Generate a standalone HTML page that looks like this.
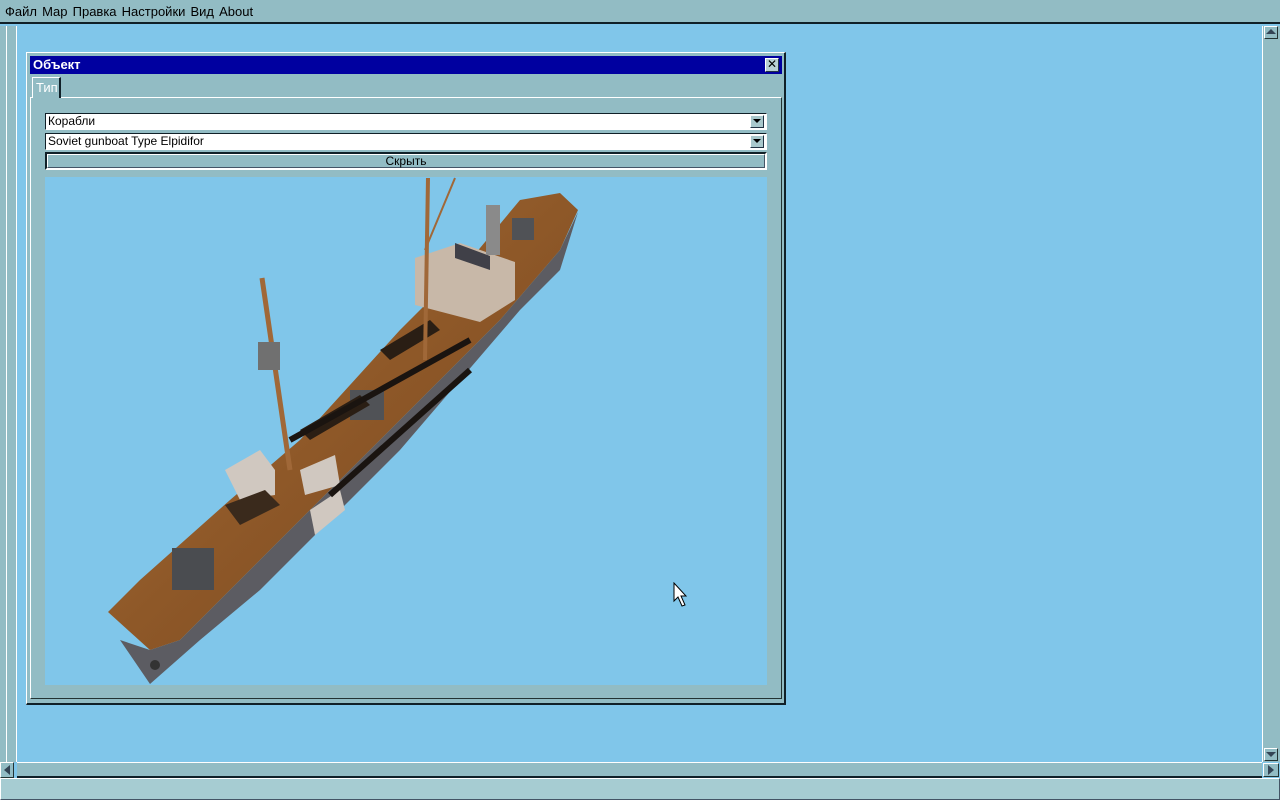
<!DOCTYPE html>
<html><head><meta charset="utf-8"><style>
*{margin:0;padding:0;box-sizing:border-box}
body{width:1280px;height:800px;background:#80c6ea;position:relative;overflow:hidden;font-family:"Liberation Sans","DejaVu Sans",sans-serif;font-size:12px}
.a{position:absolute}
.g{background:#92bcc4}
</style></head><body>
<div class="a g" style="left:0;top:0;width:1280px;height:24px;border-bottom:2px solid #102028"></div>
<div class="a" style="left:5px;top:4px;font-size:13px;color:#000;word-spacing:1.5px">Файл Мар Правка Настройки Вид About</div>
<div class="a g" style="left:0;top:26px;width:17px;height:736px;border-right:1px solid #fff"></div>
<div class="a" style="left:6px;top:26px;width:1px;height:736px;background:#fff"></div>
<div class="a g" style="left:0;top:762px;width:14px;height:16px;border:1px solid #fff;border-right-color:#233;border-bottom-color:#233"></div>
<div class="a" style="left:4px;top:765px;width:0;height:0;border-top:5px solid transparent;border-bottom:5px solid transparent;border-right:6px solid #345"></div>
<div class="a g" style="left:1262px;top:26px;width:18px;height:736px;border-left:1px solid #fff"></div>
<div class="a g" style="left:1264px;top:26px;width:14px;height:13px;border:1px solid #fff;border-right-color:#233;border-bottom-color:#233"></div>
<div class="a" style="left:1266px;top:29px;width:0;height:0;border-left:5px solid transparent;border-right:5px solid transparent;border-bottom:5px solid #345"></div>
<div class="a g" style="left:1264px;top:748px;width:14px;height:13px;border:1px solid #fff;border-right-color:#233;border-bottom-color:#233"></div>
<div class="a" style="left:1266px;top:752px;width:0;height:0;border-left:5px solid transparent;border-right:5px solid transparent;border-top:5px solid #345"></div>
<div class="a g" style="left:17px;top:762px;width:1245px;height:16px;border-top:1px solid #fff;border-bottom:2px solid #102028"></div>
<div class="a g" style="left:1263px;top:763px;width:16px;height:14px;border:1px solid #fff;border-right-color:#233;border-bottom-color:#233"></div>
<div class="a" style="left:1268px;top:765px;width:0;height:0;border-top:5px solid transparent;border-bottom:5px solid transparent;border-left:6px solid #345"></div>
<div class="a" style="left:0;top:778px;width:1280px;height:22px;background:#a6ccd2;border:1px solid #fff;border-right-color:#456;border-bottom-color:#456"></div>
<div class="a g" style="left:26px;top:52px;width:760px;height:653px;border:1px solid #fff;border-right:2px solid #102028;border-bottom:2px solid #102028"></div>
<div class="a" style="left:30px;top:56px;width:752px;height:18px;background:#0000a0;color:#fff;font-weight:bold;font-size:13px;padding:1px 3px">Объект</div>
<div class="a" style="left:765px;top:58px;width:14px;height:14px;background:#b8d0d4;border:1px solid #fff;border-right-color:#234;border-bottom-color:#234;font-size:12px;line-height:11px;text-align:center;font-weight:bold;color:#000">✕</div>
<div class="a" style="left:30px;top:97px;width:752px;height:602px;border-top:1px solid #fff;border-left:1px solid #fff;border-right:1px solid #233;border-bottom:1px solid #233"></div>
<div class="a g" style="left:32px;top:77px;width:29px;height:21px;border:1px solid #fff;border-right:2px solid #102028;border-bottom:none;color:#fff;font-size:13px;padding:2px 3px">Тип</div>
<div class="a" style="left:45px;top:113px;width:722px;height:17px;background:#fff;border:1px solid #102028;border-right-color:#fff;border-bottom-color:#fff;padding:0 2px;line-height:14px">Корабли</div>
<div class="a" style="left:750px;top:115px;width:14px;height:13px;background:#a8c8cc;border:1px solid #fff;border-right-color:#234;border-bottom-color:#234"></div>
<div class="a" style="left:753px;top:119px;border-left:4px solid transparent;border-right:4px solid transparent;border-top:4px solid #000"></div>
<div class="a" style="left:45px;top:133px;width:722px;height:17px;background:#fff;border:1px solid #102028;border-right-color:#fff;border-bottom-color:#fff;padding:0 2px;line-height:14px">Soviet gunboat Type Elpidifor</div>
<div class="a" style="left:750px;top:135px;width:14px;height:13px;background:#a8c8cc;border:1px solid #fff;border-right-color:#234;border-bottom-color:#234"></div>
<div class="a" style="left:753px;top:139px;border-left:4px solid transparent;border-right:4px solid transparent;border-top:4px solid #000"></div>
<div class="a g" style="left:45px;top:152px;width:722px;height:18px;border:2px solid #102028;border-right-color:#fff;border-bottom-color:#fff;text-align:center;line-height:13px">
<div style="border:1px solid #fff;border-right-color:#456;border-bottom-color:#456;height:14px;line-height:12px">Скрыть</div></div>
<div class="a" style="left:45px;top:177px;width:722px;height:508px;background:#80c6ea;overflow:hidden">
<svg width="722" height="508" viewBox="45 177 722 508">
<defs><linearGradient id="w" x1="0" y1="0" x2="1" y2="1"><stop offset="0" stop-color="#a86e3c"/><stop offset="0.5" stop-color="#8e5828"/><stop offset="1" stop-color="#74441e"/></linearGradient></defs>
<polygon points="150,650 180,640 250,570 330,490 420,400 500,320 560,250 578,212 560,270 520,310 460,380 400,450 330,520 260,590 200,640 150,684 120,640" fill="#5c5c62"/>
<polygon points="108,612 140,580 230,500 300,440 400,330 470,260 520,200 560,193 578,210 560,250 500,320 420,400 330,490 250,570 180,640 150,650" fill="url(#w)"/>
<polygon points="415,258 460,243 515,262 515,300 480,322 415,305" fill="#c8b8a8"/>
<polygon points="455,243 490,256 490,270 455,258" fill="#404048"/>
<rect x="486" y="205" width="14" height="50" fill="#8a8a8a"/>
<rect x="172" y="548" width="42" height="42" fill="#4a4c50"/>
<rect x="350" y="390" width="34" height="30" fill="#505256"/>
<rect x="512" y="218" width="22" height="22" fill="#505256"/>
<polygon points="225,470 260,450 275,470 275,495 240,500" fill="#d0c8c0"/>
<polygon points="300,470 335,455 340,485 305,495" fill="#d0c8c0"/>
<polygon points="310,510 340,490 345,510 315,535" fill="#d0c8c0"/>
<polygon points="225,505 265,490 280,505 240,525" fill="#3a2a1c"/>
<polygon points="300,430 360,395 370,405 310,440" fill="#2a1e14"/>
<polygon points="380,350 430,320 440,330 390,360" fill="#2a1e14"/>
<line x1="290" y1="440" x2="470" y2="340" stroke="#1a1410" stroke-width="6"/>
<line x1="330" y1="495" x2="470" y2="370" stroke="#1a1410" stroke-width="6"/>
<line x1="262" y1="278" x2="290" y2="470" stroke="#a06838" stroke-width="5"/>
<rect x="258" y="342" width="22" height="28" fill="#707070"/>
<line x1="428" y1="178" x2="425" y2="360" stroke="#a06838" stroke-width="4"/>
<line x1="455" y1="178" x2="425" y2="250" stroke="#a06838" stroke-width="2"/>
<circle cx="155" cy="665" r="5" fill="#333"/>
</svg></div>
<svg class="a" style="left:673px;top:582px" width="14" height="26"><path d="M1 1 L1 19 L5 15 L9 24 L12 23 L8 14 L13 14 Z" fill="#fff" stroke="#000"/></svg>
</body></html>
